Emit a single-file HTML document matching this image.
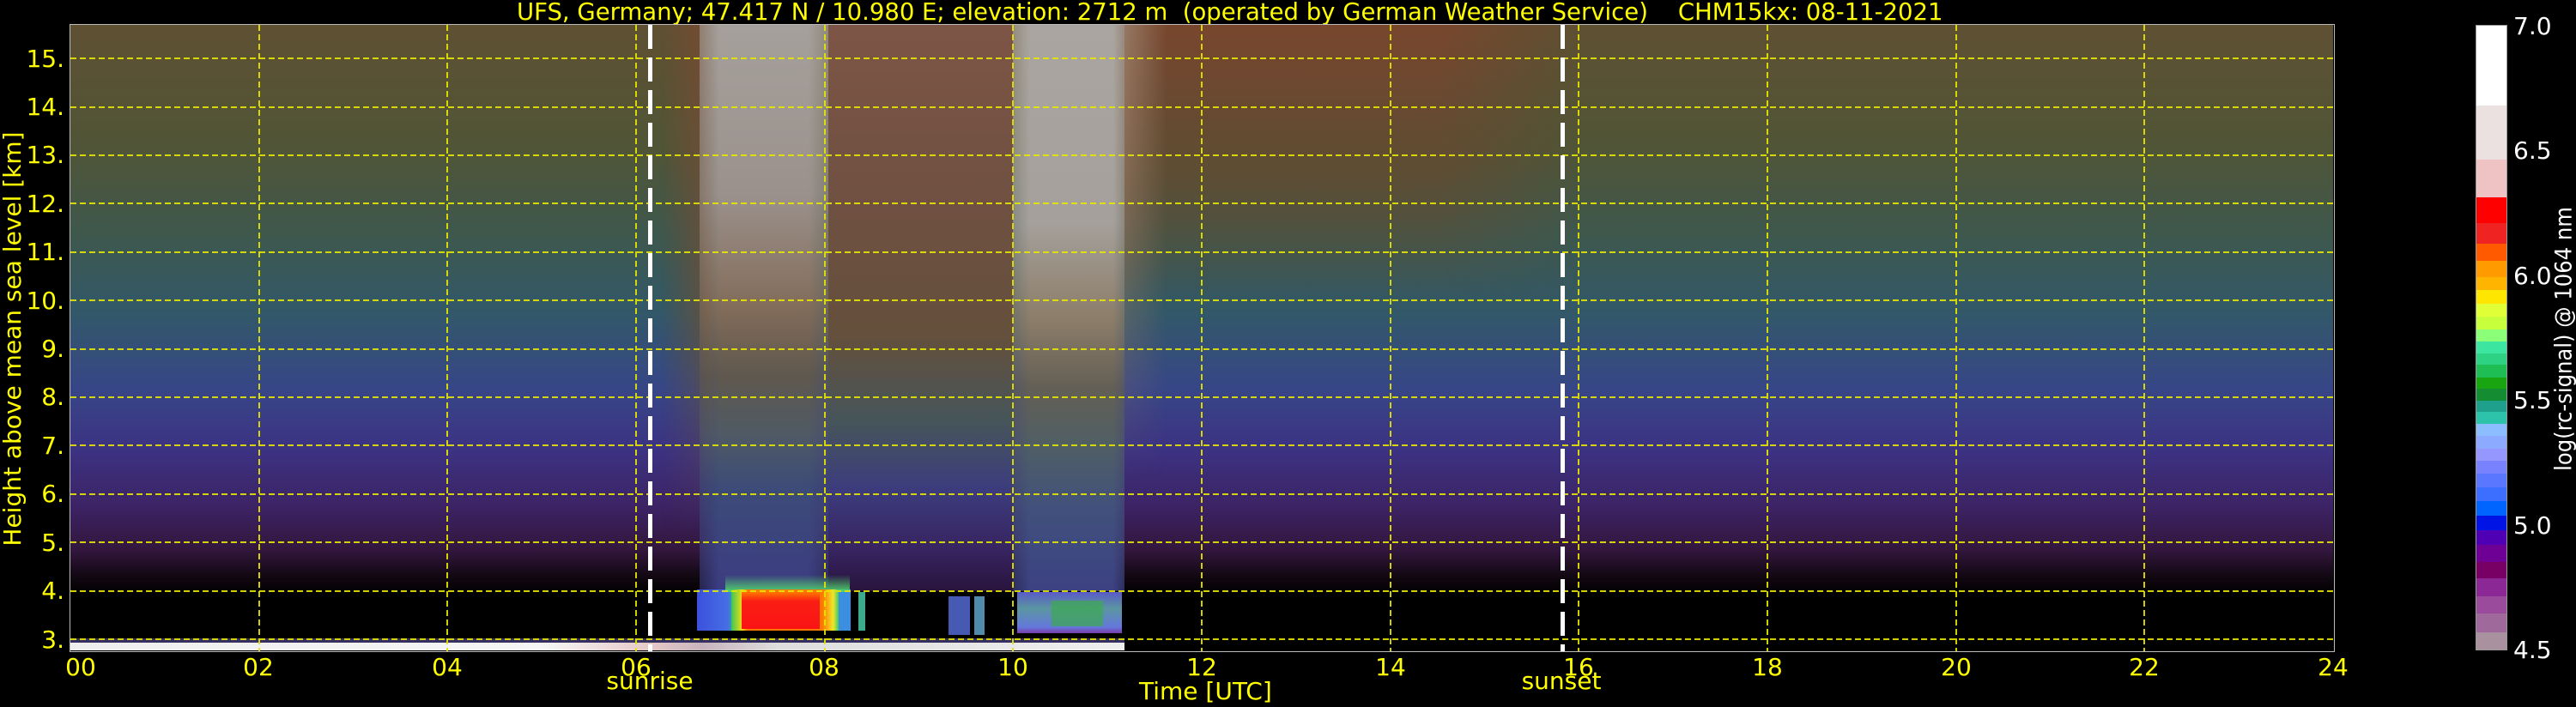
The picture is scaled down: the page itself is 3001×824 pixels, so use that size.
<!DOCTYPE html>
<html><head><meta charset="utf-8"><style>
body{margin:0;background:#000;width:3001px;height:824px;overflow:hidden;position:relative;font-family:"DejaVu Sans","Liberation Sans",sans-serif;color:#ffff00}
.a{position:absolute}
.t{position:absolute;font-size:28px;line-height:1;white-space:nowrap}
.h{position:absolute;left:82px;width:2636px;height:2px;background:repeating-linear-gradient(90deg,#e6e600 0 7px,transparent 7px 11px);opacity:.9}
.v{position:absolute;top:29px;height:730px;width:2px;background:repeating-linear-gradient(180deg,#e6e600 0 7px,transparent 7px 11px);opacity:.9}
.yl{position:absolute;right:2926px;font-size:28px;line-height:1}
.xl{position:absolute;top:764px;font-size:28px;line-height:1;transform:translateX(-50%)}
.cl{position:absolute;left:2928px;font-size:28px;line-height:1;color:#fff;transform:translateY(-50%)}
</style></head><body>
<div class="t" style="left:602px;top:1px;font-size:27.5px">UFS, Germany; 47.417 N / 10.980 E; elevation: 2712 m&nbsp; (operated by German Weather Service)&nbsp;&nbsp;&nbsp; CHM15kx: 08-11-2021</div>

<div class="a" style="left:82px;top:29px;width:2636px;height:730px;background:linear-gradient(180deg,rgb(95,80,50) 0%,rgb(80,85,55) 20%,rgb(60,88,80) 35%,rgb(50,88,105) 46%,rgb(55,70,135) 58%,rgb(60,50,130) 68%,rgb(60,35,100) 77%,rgb(50,22,60) 84%,rgb(18,8,18) 88%,#000 91%,#000 100%)"></div>
<div class="a" style="left:1300px;top:29px;width:540px;height:400px;background:linear-gradient(180deg,rgb(120,70,45) 0%,rgb(100,75,50) 30%,rgba(80,85,60,0) 80%);-webkit-mask-image:linear-gradient(90deg,#000 0%,#000 70%,transparent 100%)"></div>
<div class="a" style="left:770px;top:29px;width:60px;height:660px;background:linear-gradient(180deg,rgb(120,75,50) 0%,rgb(100,80,60) 50%,rgba(60,90,90,0) 90%);-webkit-mask-image:linear-gradient(90deg,transparent,#000)"></div>
<div class="a" style="left:815px;top:29px;width:150px;height:660px;background:linear-gradient(180deg,rgb(165,160,155) 0%,rgb(155,145,140) 30%,rgb(130,108,90) 50%,rgb(95,88,78) 62%,rgb(80,90,100) 72%,rgb(60,75,120) 82%,rgb(60,60,130) 100%);-webkit-mask-image:linear-gradient(90deg,rgba(0,0,0,.6),#000 15%,#000 85%,rgba(0,0,0,.7))"></div>
<div class="a" style="left:965px;top:29px;width:215px;height:660px;background:linear-gradient(180deg,rgb(125,85,70) 0%,rgb(110,80,65) 35%,rgb(100,80,60) 55%,rgb(70,85,90) 70%,rgb(60,60,125) 82%,rgb(55,35,95) 93%,rgb(40,20,60) 100%)"></div>
<div class="a" style="left:1180px;top:29px;width:130px;height:660px;background:linear-gradient(180deg,rgb(170,165,160) 0%,rgb(165,160,155) 35%,rgb(140,125,105) 52%,rgb(100,95,85) 64%,rgb(80,95,100) 74%,rgb(65,80,125) 86%,rgb(60,65,130) 100%);-webkit-mask-image:linear-gradient(90deg,rgba(0,0,0,.7),#000 15%,#000 90%,rgba(0,0,0,.7))"></div>
<div class="a" style="left:1310px;top:29px;width:50px;height:660px;background:linear-gradient(180deg,rgb(150,120,100),rgba(100,90,80,0) 80%);-webkit-mask-image:linear-gradient(90deg,#000,transparent)"></div>

<div class="a" style="left:812px;top:687px;width:179px;height:48px;background:linear-gradient(90deg,rgb(60,80,220),rgb(70,110,230) 20%,rgb(40,190,120) 25%,rgb(60,140,230) 100%)"></div>
<div class="a" style="left:845px;top:670px;width:145px;height:20px;background:linear-gradient(180deg,rgba(60,200,120,0),rgb(80,210,110))"></div>
<div class="a" style="left:852px;top:687px;width:125px;height:48px;background:linear-gradient(90deg,rgb(60,200,90),rgb(240,220,20) 10%,rgb(255,120,0) 15%,rgb(255,120,0) 85%,rgb(240,230,40) 95%,rgb(60,200,110))"></div>
<div class="a" style="left:864px;top:690px;width:91px;height:43px;background:linear-gradient(180deg,rgb(255,120,0),rgb(250,30,20) 25%,rgb(250,20,20))"></div>
<div class="a" style="left:1000px;top:690px;width:8px;height:45px;background:rgb(60,170,140)"></div>
<div class="a" style="left:1105px;top:695px;width:25px;height:45px;background:rgb(70,90,180)"></div>
<div class="a" style="left:1135px;top:695px;width:12px;height:45px;background:rgb(80,140,170)"></div>
<div class="a" style="left:1185px;top:690px;width:122px;height:48px;background:linear-gradient(180deg,rgb(90,90,200),rgb(90,150,160) 40%,rgb(100,120,220) 85%,rgb(120,60,170));"></div>
<div class="a" style="left:1225px;top:700px;width:60px;height:30px;background:rgb(60,170,80);opacity:.7"></div>
<div class="a" style="left:82px;top:749px;width:1228px;height:9px;background:linear-gradient(90deg,#eee 0%,#f5f5f5 45%,rgb(230,200,200) 55%,rgb(200,180,190) 60%,#ddd 67%,#eee 100%)"></div>
<div class="a" style="left:82px;top:744px;width:1228px;height:5px;background:rgb(90,80,160);opacity:.6"></div>

<div class="h" style="top:67px"></div><div class="h" style="top:124px"></div><div class="h" style="top:180px"></div><div class="h" style="top:236px"></div><div class="h" style="top:293px"></div><div class="h" style="top:349px"></div><div class="h" style="top:406px"></div><div class="h" style="top:462px"></div><div class="h" style="top:518px"></div><div class="h" style="top:575px"></div><div class="h" style="top:631px"></div><div class="h" style="top:688px"></div><div class="h" style="top:744px"></div>
<div class="v" style="left:301px"></div><div class="v" style="left:520px"></div><div class="v" style="left:740px"></div><div class="v" style="left:960px"></div><div class="v" style="left:1179px"></div><div class="v" style="left:1399px"></div><div class="v" style="left:1619px"></div><div class="v" style="left:1838px"></div><div class="v" style="left:2058px"></div><div class="v" style="left:2278px"></div><div class="v" style="left:2497px"></div>
<div class="a" style="left:81px;top:28px;width:2637px;height:730px;border:1px solid #bbb"></div>
<div class="a" style="left:755px;top:29px;width:5px;height:730px;background:repeating-linear-gradient(180deg,#fff 0 28px,transparent 28px 38px)"></div>
<div class="a" style="left:1818px;top:29px;width:5px;height:730px;background:repeating-linear-gradient(180deg,#fff 0 28px,transparent 28px 38px)"></div>

<div class="yl" style="top:55px">15.</div><div class="yl" style="top:111px">14.</div><div class="yl" style="top:167px">13.</div><div class="yl" style="top:224px">12.</div><div class="yl" style="top:280px">11.</div><div class="yl" style="top:337px">10.</div><div class="yl" style="top:393px">9.</div><div class="yl" style="top:449px">8.</div><div class="yl" style="top:506px">7.</div><div class="yl" style="top:562px">6.</div><div class="yl" style="top:619px">5.</div><div class="yl" style="top:675px">4.</div><div class="yl" style="top:732px">3.</div>
<div class="t" style="left:15px;top:395px;transform:translate(-50%,-50%) rotate(-90deg)">Height above mean sea level [km]</div>

<div class="xl" style="left:94px">00</div><div class="xl" style="left:301px">02</div><div class="xl" style="left:521px">04</div><div class="xl" style="left:741px">06</div><div class="xl" style="left:960px">08</div><div class="xl" style="left:1180px">10</div><div class="xl" style="left:1400px">12</div><div class="xl" style="left:1620px">14</div><div class="xl" style="left:1839px">16</div><div class="xl" style="left:2059px">18</div><div class="xl" style="left:2279px">20</div><div class="xl" style="left:2498px">22</div><div class="xl" style="left:2718px">24</div>
<div class="xl" style="left:757px;top:780px">sunrise</div>
<div class="xl" style="left:1819px;top:780px">sunset</div>
<div class="t" style="left:1327px;top:792px">Time [UTC]</div>

<div class="a" style="left:2884px;top:29px;width:37px;height:729px;border:1px solid #999;box-sizing:border-box;background:linear-gradient(180deg,#fff 0 93px,#ebe1e1 93px 156px,#efc3c3 156px 200px,#f00 200px 230px,#f02323 230px 254px,#ff5a00 254px 274px,#ff9a00 274px 293px,#ffb400 293px 308px,#ffe600 308px 324px,#e1ff37 324px 339px,#c8ff3c 339px 354px,#8cff78 354px 368px,#3ce6a0 368px 382px,#2dd282 382px 395px,#1ebe55 395px 410px,#19a50f 410px 423px,#148c32 423px 437px,#1ea08c 437px 450px,#2dc3aa 450px 464px,#8cbeff 464px 478px,#8caaff 478px 493px,#9696ff 493px 507px,#7882ff 507px 522px,#5a78ff 522px 538px,#3c6eff 538px 554px,#0064ff 554px 571px,#0014e6 571px 588px,#5000b4 588px 605px,#6e0096 605px 625px,#780064 625px 644px,#8c2896 644px 665px,#9b4b9b 665px 685px,#a0699b 685px 707px,#aa91a0 707px 729px)"></div>
<div class="cl" style="top:31px">7.0</div><div class="cl" style="top:176px">6.5</div><div class="cl" style="top:322px">6.0</div><div class="cl" style="top:467px">5.5</div><div class="cl" style="top:613px">5.0</div><div class="cl" style="top:758px">4.5</div>
<div class="t" style="left:2987px;top:395px;color:#fff;font-size:27px;transform:translate(-50%,-50%) rotate(-90deg) scaleX(0.9)">log(rc-signal) @ 1064 nm</div>
</body></html>
